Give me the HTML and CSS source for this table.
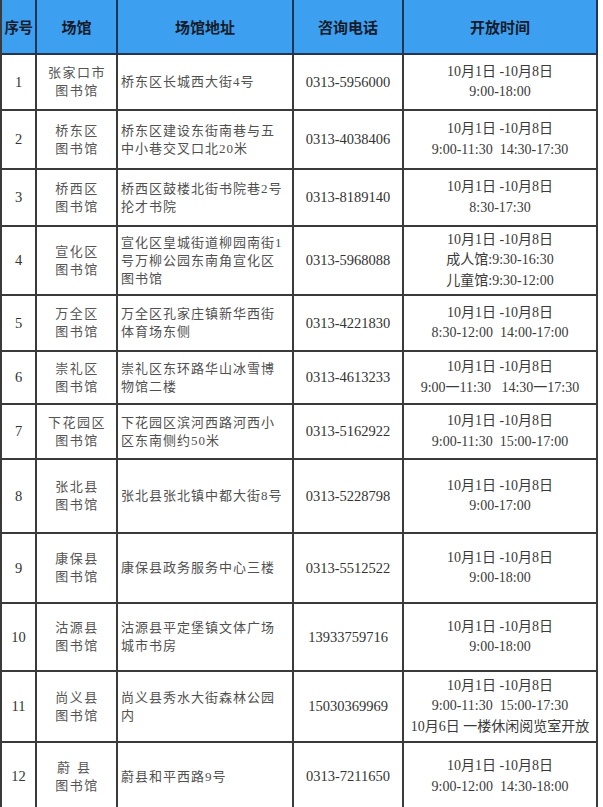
FILE: index.html
```html
<!DOCTYPE html>
<html lang="zh-CN">
<head>
<meta charset="utf-8">
<title>图书馆开放时间</title>
<link rel="stylesheet" href="styles.css">
</head>
<body>
<table class="sched">
  <thead>
    <tr class="hrow">
      <th class="c-no">序号</th>
      <th class="c-venue">场馆</th>
      <th class="c-addr">场馆地址</th>
      <th class="c-tel">咨询电话</th>
      <th class="c-time">开放时间</th>
    </tr>
  </thead>
  <tbody>
    <tr class="r1">
      <td class="no">1</td>
      <td class="venue">张家口市<br>图书馆</td>
      <td class="addr">桥东区长城西大街4号</td>
      <td class="tel">0313-5956000</td>
      <td class="time">10月1日 -10月8日<br>9:00-18:00</td>
    </tr>
    <tr class="r2">
      <td class="no">2</td>
      <td class="venue">桥东区<br>图书馆</td>
      <td class="addr">桥东区建设东街南巷与五<br>中小巷交叉口北20米</td>
      <td class="tel">0313-4038406</td>
      <td class="time">10月1日 -10月8日<br>9:00-11:30&nbsp; 14:30-17:30</td>
    </tr>
    <tr class="r3">
      <td class="no">3</td>
      <td class="venue">桥西区<br>图书馆</td>
      <td class="addr">桥西区鼓楼北街书院巷2号<br>抡才书院</td>
      <td class="tel">0313-8189140</td>
      <td class="time">10月1日 -10月8日<br>8:30-17:30</td>
    </tr>
    <tr class="r4">
      <td class="no">4</td>
      <td class="venue">宣化区<br>图书馆</td>
      <td class="addr">宣化区皇城街道柳园南街1<br>号万柳公园东南角宣化区<br>图书馆</td>
      <td class="tel">0313-5968088</td>
      <td class="time">10月1日 -10月8日<br>成人馆:9:30-16:30<br>儿童馆:9:30-12:00</td>
    </tr>
    <tr class="r5">
      <td class="no">5</td>
      <td class="venue">万全区<br>图书馆</td>
      <td class="addr">万全区孔家庄镇新华西街<br>体育场东侧</td>
      <td class="tel">0313-4221830</td>
      <td class="time">10月1日 -10月8日<br>8:30-12:00&nbsp; 14:00-17:00</td>
    </tr>
    <tr class="r6">
      <td class="no">6</td>
      <td class="venue">崇礼区<br>图书馆</td>
      <td class="addr">崇礼区东环路华山冰雪博<br>物馆二楼</td>
      <td class="tel">0313-4613233</td>
      <td class="time">10月1日 -10月8日<br>9:00一11:30&nbsp;&nbsp; 14:30一17:30</td>
    </tr>
    <tr class="r7">
      <td class="no">7</td>
      <td class="venue">下花园区<br>图书馆</td>
      <td class="addr">下花园区滨河西路河西小<br>区东南侧约50米</td>
      <td class="tel">0313-5162922</td>
      <td class="time">10月1日 -10月8日<br>9:00-11:30&nbsp; 15:00-17:00</td>
    </tr>
    <tr class="r8">
      <td class="no">8</td>
      <td class="venue">张北县<br>图书馆</td>
      <td class="addr">张北县张北镇中都大街8号</td>
      <td class="tel">0313-5228798</td>
      <td class="time">10月1日 -10月8日<br>9:00-17:00</td>
    </tr>
    <tr class="r9">
      <td class="no">9</td>
      <td class="venue">康保县<br>图书馆</td>
      <td class="addr">康保县政务服务中心三楼</td>
      <td class="tel">0313-5512522</td>
      <td class="time">10月1日 -10月8日<br>9:00-18:00</td>
    </tr>
    <tr class="r10">
      <td class="no">10</td>
      <td class="venue">沽源县<br>图书馆</td>
      <td class="addr">沽源县平定堡镇文体广场<br>城市书房</td>
      <td class="tel">13933759716</td>
      <td class="time">10月1日 -10月8日<br>9:00-18:00</td>
    </tr>
    <tr class="r11">
      <td class="no">11</td>
      <td class="venue">尚义县<br>图书馆</td>
      <td class="addr">尚义县秀水大街森林公园<br>内</td>
      <td class="tel">15030369969</td>
      <td class="time">10月1日 -10月8日<br>9:00-11:30&nbsp; 15:00-17:30<br>10月6日 一楼休闲阅览室开放</td>
    </tr>
    <tr class="r12">
      <td class="no">12</td>
      <td class="venue"><span class="wide">蔚县</span><br>图书馆</td>
      <td class="addr">蔚县和平西路9号</td>
      <td class="tel">0313-7211650</td>
      <td class="time">10月1日 -10月8日<br>9:00-12:00&nbsp; 14:30-18:00</td>
    </tr>
  </tbody>
</table>
</body>
</html>
```
FILE: styles.css
```css
html, body {
  margin: 0;
  padding: 0;
  background: #ffffff;
}

.sched {
  width: 598px;
  table-layout: fixed;
  border-collapse: separate;
  border-spacing: 0;
  border-left: 2px solid #3a3a3a;
  font-family: "Liberation Serif", "Noto Sans CJK SC", serif;
  color: #3a3a3a;
}

.sched th,
.sched td {
  box-sizing: border-box;
  padding: 0;
  border-right: 2px solid #3a3a3a;
  border-bottom: 2px solid #3a3a3a;
  text-align: center;
  vertical-align: middle;
}

.sched .c-no { width: 35px; }
.sched .c-venue { width: 81px; }
.sched .c-addr { width: 176px; }
.sched .c-tel { width: 110px; }
.sched .c-time { width: 194px; }

.hrow { height: 55px; }

.sched th {
  background: #3d9ff0;
  color: #161c2a;
  font-family: "Noto Sans CJK SC", sans-serif;
  font-weight: 700;
  font-size: 15px;
  line-height: 18px;
  border-right-color: #1f3556;
  border-bottom-color: #26354f;
}

.sched th.c-no {
  letter-spacing: -0.5px;
  font-size: 14.5px;
}

.sched .no {
  font-size: 14.5px;
  color: #333;
}

.sched .venue {
  font-size: 13px;
  letter-spacing: 1.5px;
  line-height: 18px;
  color: #555;
  padding-left: 1px;
}

.sched .venue .wide {
  letter-spacing: 7px;
}

.sched .addr {
  text-align: left;
  padding-left: 3px;
  font-size: 13px;
  letter-spacing: 1px;
  line-height: 18px;
  color: #505050;
  white-space: nowrap;
}

.sched .tel {
  font-size: 14.5px;
  color: #333;
}

.sched .time {
  font-size: 14px;
  line-height: 20.5px;
  color: #3a3a3a;
  white-space: nowrap;
}

.r1 { height: 56px; }
.r2 { height: 59px; }
.r3 { height: 57px; }
.r4 { height: 69px; }
.r5 { height: 56px; }
.r6 { height: 53px; }
.r7 { height: 55px; }
.r8 { height: 74px; }
.r9 { height: 70px; }
.r10 { height: 68px; }
.r11 { height: 71px; }
.r12 { height: 69px; }
```
